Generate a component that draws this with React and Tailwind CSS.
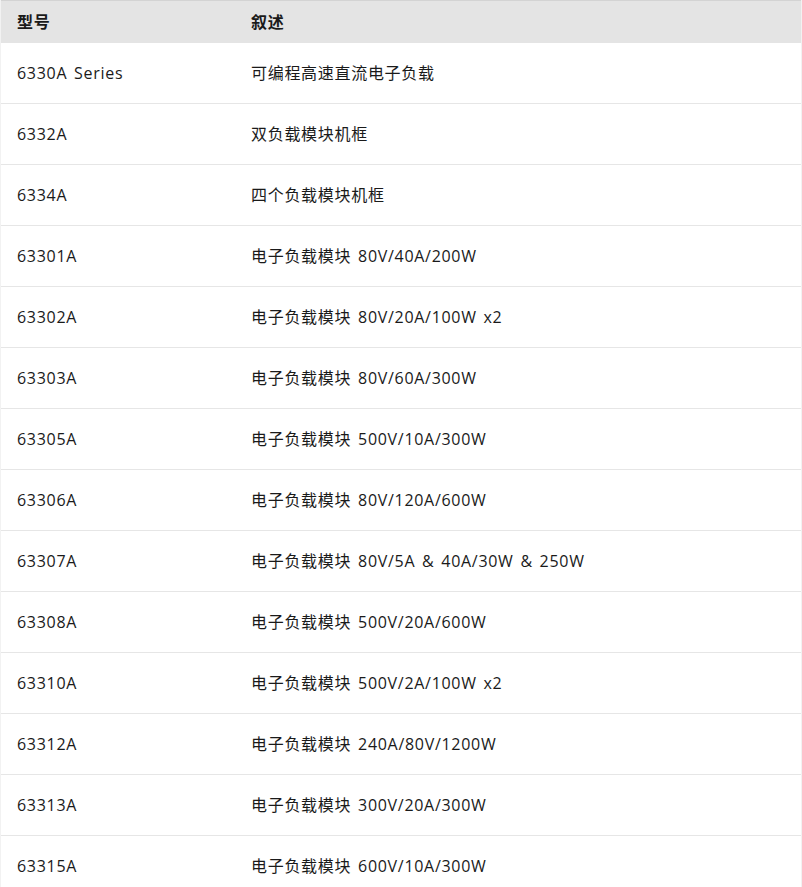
import React from "react";

const rows = [
  ["6330A Series", "可编程高速直流电子负载"],
  ["6332A", "双负载模块机框"],
  ["6334A", "四个负载模块机框"],
  ["63301A", "电子负载模块 80V/40A/200W"],
  ["63302A", "电子负载模块 80V/20A/100W x2"],
  ["63303A", "电子负载模块 80V/60A/300W"],
  ["63305A", "电子负载模块 500V/10A/300W"],
  ["63306A", "电子负载模块 80V/120A/600W"],
  ["63307A", "电子负载模块 80V/5A & 40A/30W & 250W"],
  ["63308A", "电子负载模块 500V/20A/600W"],
  ["63310A", "电子负载模块 500V/2A/100W x2"],
  ["63312A", "电子负载模块 240A/80V/1200W"],
  ["63313A", "电子负载模块 300V/20A/300W"],
  ["63315A", "电子负载模块 600V/10A/300W"],
];

export default function App() {
  return (
    <div className="w-[802px] bg-white border-x border-[#f2f2f2] font-['Open_Sans','Noto_Sans_CJK_SC',sans-serif] text-[16px] tracking-[0.7px] [word-spacing:2px] text-[#1a1a1a]">
      <div className="grid h-[43px] grid-cols-[233px_1fr] items-center border-t border-[#d3d3d3] bg-[#e4e4e4] font-bold">
        <div className="pl-[16px]">型号</div>
        <div className="pl-[17px]">叙述</div>
      </div>
      {rows.map(([a, b]) => (
        <div
          key={a}
          className="grid h-[61px] grid-cols-[233px_1fr] items-center border-b border-[#e6e6e6]"
        >
          <div className="pl-[16px]">{a}</div>
          <div className="pl-[17px]">{b}</div>
        </div>
      ))}
    </div>
  );
}
